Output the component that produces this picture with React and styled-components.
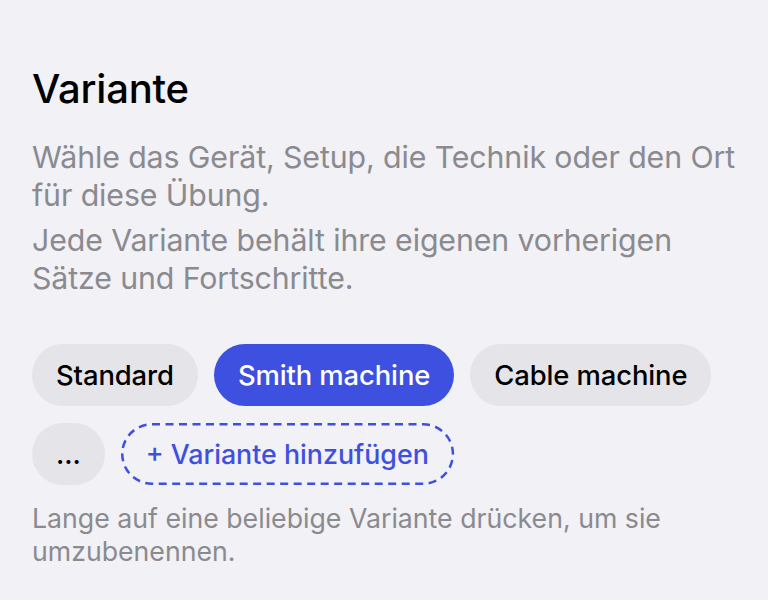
import React from 'react';
import styled, { createGlobalStyle } from 'styled-components';

const GlobalStyle = createGlobalStyle`
  html, body {
    margin: 0;
    padding: 0;
    background: #f1f1f6;
  }
  body {
    font-family: Inter, "Noto Sans", sans-serif;
    -webkit-font-smoothing: antialiased;
  }
`;

const Page = styled.div`
  width: 768px;
  height: 600px;
  box-sizing: border-box;
  padding: 63px 32px 0 32px;
  background: #f1f1f6;
  overflow: hidden;
`;

const Title = styled.h1`
  margin: 0 0 23px 0;
  font-size: 40px;
  font-weight: 500;
  letter-spacing: -0.2px;
  color: #000;
  line-height: 52px;
`;

const Description = styled.p`
  margin: 0 0 7px 0;
  font-size: 30.3px;
  line-height: 38px;
  color: #8a8a8f;
  letter-spacing: -0.1px;
`;

const ChipWrap = styled.div`
  display: flex;
  flex-wrap: wrap;
  gap: 17px 16px;
  margin-top: 47px;
`;

const Chip = styled.button`
  height: 62px;
  box-sizing: border-box;
  padding: 0 24px;
  border-radius: 31px;
  border: none;
  font-family: inherit;
  font-size: 27.4px;
  font-weight: 500;
  letter-spacing: -0.1px;
  background: ${({ active }) => (active ? '#3d50e0' : '#e4e4e9')};
  color: ${({ active }) => (active ? '#ffffff' : '#000000')};
  cursor: pointer;
`;

const AddChip = styled.button`
  position: relative;
  height: 62px;
  box-sizing: border-box;
  padding: 0 25px;
  border-radius: 31px;
  border: none;
  background: transparent;
  font-family: inherit;
  font-size: 26.8px;
  font-weight: 500;
  color: #3d50e0;
  cursor: pointer;
`;

const DashedOutline = styled.svg`
  position: absolute;
  inset: 0;
  width: 100%;
  height: 100%;
  overflow: visible;
  pointer-events: none;
`;

const Hint = styled.p`
  margin: 17px 0 0 0;
  font-size: 26.7px;
  line-height: 33px;
  color: #8a8a8f;
`;

const variants = ['Standard', 'Smith machine', 'Cable machine', '...'];

export default function App() {
  return (
    <Page>
      <GlobalStyle />
      <Title>Variante</Title>
      <Description>Wähle das Gerät, Setup, die Technik oder den Ort für diese Übung.</Description>
      <Description>Jede Variante behält ihre eigenen vorherigen Sätze und Fortschritte.</Description>
      <ChipWrap>
        {variants.map((v) => (
          <Chip key={v} active={v === 'Smith machine'}>{v}</Chip>
        ))}
        <AddChip>
          <DashedOutline>
            <rect
              x="1.25"
              y="1.25"
              width="calc(100% - 2.5px)"
              height="calc(100% - 2.5px)"
              rx="29.75"
              fill="none"
              stroke="#3d50e0"
              strokeWidth="2.5"
              strokeDasharray="8 5.5"
            />
          </DashedOutline>
          + Variante hinzufügen
        </AddChip>
      </ChipWrap>
      <Hint>Lange auf eine beliebige Variante drücken, um sie umzubenennen.</Hint>
    </Page>
  );
}
